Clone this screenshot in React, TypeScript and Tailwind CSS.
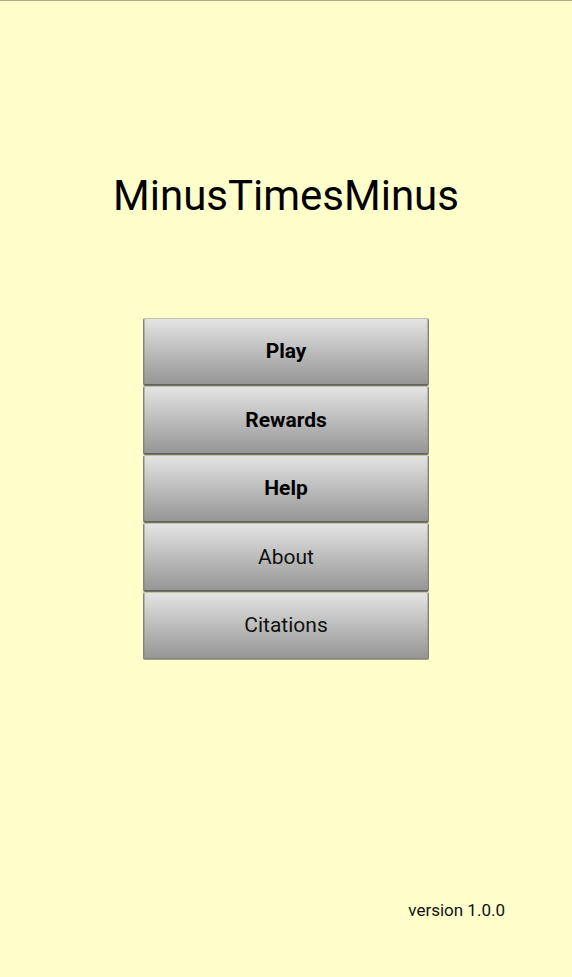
const items = [
  { label: "Play", bold: true },
  { label: "Rewards", bold: true },
  { label: "Help", bold: true },
  { label: "About", bold: false },
  { label: "Citations", bold: false },
];

export default function App() {
  return (
    <main className="flex min-h-screen flex-col items-center border-t border-[#b0ae8c] bg-[#ffffcb] font-[Roboto,sans-serif] text-black">
      <h1 className="mt-[170px] text-[42px] leading-[50px]">MinusTimesMinus</h1>
      <nav className="mt-[97px] grid h-[342px] w-1/2 grid-rows-5">
        {items.map(({ label, bold }) => (
          <button
            key={label}
            type="button"
            className={`w-full rounded-[2px] border border-t-[#c4c4a4] border-r-[#868678] border-b-[#73736a] border-l-[#868678] bg-linear-to-b from-[#e4e4e4] to-[#959595] text-[21px] shadow-[inset_0_-1px_#626262,inset_1px_0_#8a8a8a80,inset_-1px_0_#8a8a8a80] last:border-b-[#a0a088] last:shadow-[inset_0_-1px_#888888,inset_1px_0_#8a8a8a80,inset_-1px_0_#8a8a8a80] ${bold ? "font-bold" : "font-normal text-[#111]"}`}
          >
            {label}
          </button>
        ))}
      </nav>
      <p className="mt-auto mr-[67px] mb-[55px] self-end text-[17px] leading-6 text-[#111]">version 1.0.0</p>
    </main>
  );
}
